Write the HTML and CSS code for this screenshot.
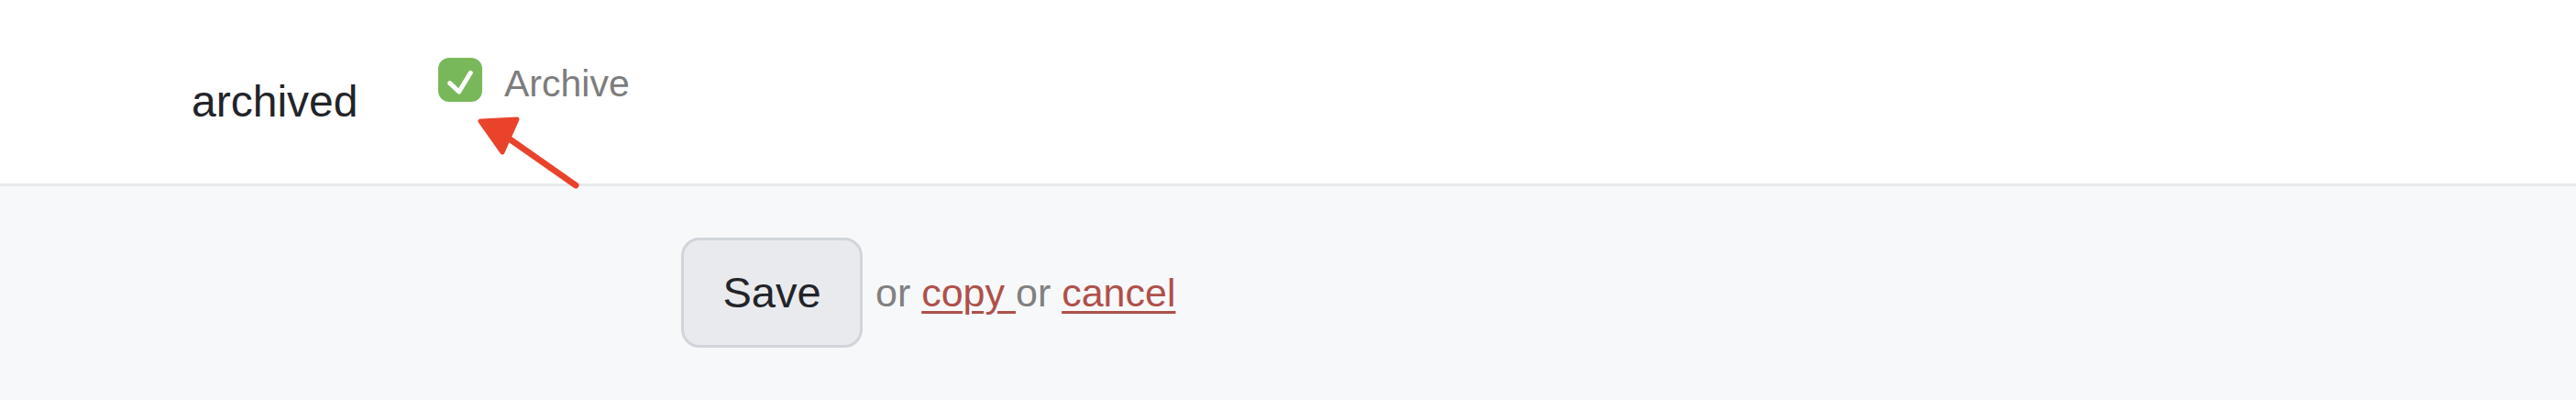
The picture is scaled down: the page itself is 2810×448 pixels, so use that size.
FILE: index.html
```html
<!DOCTYPE html>
<html lang="en">
<head>
<meta charset="utf-8">
<title>Archive setting</title>
<link rel="stylesheet" href="styles.css">
</head>
<body>
<div class="page">
  <div class="field-row">
    <div class="field-label">archived</div>
    <label class="field-control">
      <span class="checkbox">
        <svg width="48" height="48" viewBox="0 0 48 48" aria-hidden="true">
          <path d="M12.7 27.7 L22.7 37 L35.3 16.3" fill="none" stroke="#ffffff" stroke-width="5" stroke-linecap="round" stroke-linejoin="round"/>
        </svg>
      </span>
      <span class="checkbox-text">Archive</span>
    </label>
  </div>
  <div class="actions">
    <button class="btn-save" type="button">Save</button>
    <span class="alt-actions">or <a href="#" class="link">copy </a>or <a href="#" class="link">cancel</a></span>
  </div>
  <svg class="annotation" width="140" height="100" viewBox="0 0 140 100" aria-hidden="true">
    <path d="M12 14 L52 12 L36 48 Z" fill="#e9432b" stroke="#e9432b" stroke-width="5" stroke-linejoin="round"/>
    <path d="M36 28 L116 84" fill="none" stroke="#e9432b" stroke-width="7" stroke-linecap="round"/>
  </svg>
</div>
</body>
</html>
```
FILE: styles.css
```css
html, body {
  margin: 0;
  padding: 0;
  background: #ffffff;
}

body {
  font-family: "Liberation Sans", Arial, Helvetica, sans-serif;
  width: 2810px;
  height: 448px;
  overflow: hidden;
}

.page {
  position: relative;
}

.field-row {
  display: flex;
  align-items: flex-start;
  box-sizing: border-box;
  height: 203px;
  padding: 63px 0 0 209px;
  border-bottom: 3px solid #e8e9ec;
}

.field-label {
  width: 269px;
  margin-top: 20px;
  font-size: 48px;
  line-height: 56px;
  color: #222429;
}

.field-control {
  display: flex;
  align-items: flex-start;
  gap: 24px;
}

.checkbox {
  display: block;
  width: 48px;
  height: 48px;
  border-radius: 12px;
  background: #79b85a;
}

.checkbox svg {
  display: block;
}

.checkbox-text {
  margin-top: 4px;
  font-size: 41px;
  line-height: 48px;
  color: #7d7d7d;
}

.actions {
  display: flex;
  align-items: center;
  gap: 14px;
  box-sizing: border-box;
  height: 233px;
  padding: 56px 0 57px 743px;
  background: #f7f8fa;
}

.btn-save {
  box-sizing: border-box;
  width: 198px;
  height: 120px;
  margin: 0;
  padding: 0;
  border: 3px solid #d1d5da;
  border-radius: 20px;
  background: #e9eaee;
  font-family: "Liberation Sans", Arial, Helvetica, sans-serif;
  font-size: 47px;
  line-height: 54px;
  color: #222429;
}

.alt-actions {
  font-size: 43px;
  line-height: 48px;
  color: #808080;
}

.link {
  color: #b0504a;
  text-decoration: underline;
  text-decoration-thickness: 3px;
  text-underline-offset: 5px;
}

.annotation {
  position: absolute;
  left: 512px;
  top: 118px;
}
```
